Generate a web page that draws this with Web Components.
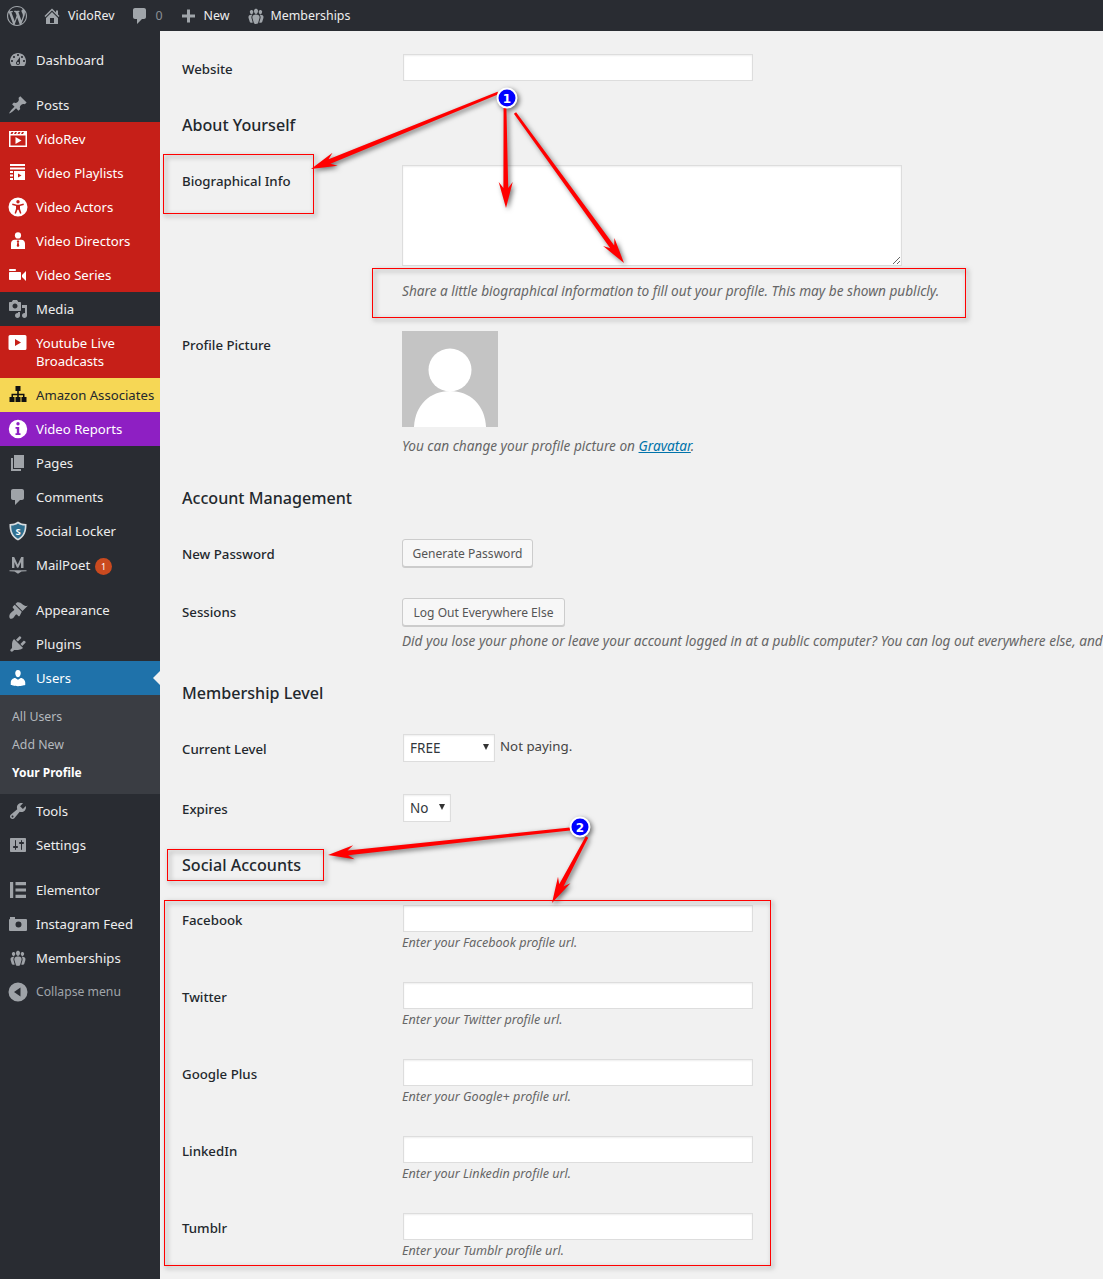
<!DOCTYPE html>
<html lang="en">
<head>
<meta charset="utf-8"/>
<title>Profile</title>
<style>
  html, body { margin: 0; padding: 0; overflow: hidden; }
  body { font-family: "Noto Sans", "Open Sans", sans-serif; }
  #page { position: relative; display: grid; grid-template-columns: 160px 1fr; grid-template-rows: 31px 1fr; width: 1103px; height: 1279px; overflow: hidden; background: #f1f1f1; }
  wp-adminbar { grid-column: 1 / 3; }
</style>
</head>
<body>
<div id="page">
  <wp-adminbar></wp-adminbar>
  <wp-sidebar>
    <wp-item icon="dashboard">Dashboard</wp-item>
    <wp-sep></wp-sep>
    <wp-item icon="pin">Posts</wp-item>
    <wp-item icon="film" tone="red">VidoRev</wp-item>
    <wp-item icon="playlist" tone="red">Video Playlists</wp-item>
    <wp-item icon="actor" tone="red">Video Actors</wp-item>
    <wp-item icon="director" tone="red">Video Directors</wp-item>
    <wp-item icon="series" tone="red">Video Series</wp-item>
    <wp-item icon="media">Media</wp-item>
    <wp-item icon="youtube" tone="red">Youtube Live Broadcasts</wp-item>
    <wp-item icon="sitemap" tone="yellow">Amazon Associates</wp-item>
    <wp-item icon="info" tone="purple">Video Reports</wp-item>
    <wp-item icon="pages">Pages</wp-item>
    <wp-item icon="comment">Comments</wp-item>
    <wp-item icon="shield">Social Locker</wp-item>
    <wp-item icon="mailpoet" badge="1">MailPoet</wp-item>
    <wp-sep></wp-sep>
    <wp-item icon="brush">Appearance</wp-item>
    <wp-item icon="plug">Plugins</wp-item>
    <wp-item icon="users" tone="blue">Users</wp-item>
    <wp-submenu>
      <a>All Users</a>
      <a>Add New</a>
      <a class="on">Your Profile</a>
    </wp-submenu>
    <wp-item icon="wrench">Tools</wp-item>
    <wp-item icon="sliders">Settings</wp-item>
    <wp-sep></wp-sep>
    <wp-item icon="elementor">Elementor</wp-item>
    <wp-item icon="camera">Instagram Feed</wp-item>
    <wp-item icon="groups">Memberships</wp-item>
    <wp-item icon="collapse" tone="muted">Collapse menu</wp-item>
  </wp-sidebar>
  <wp-profile></wp-profile>
  <wp-callouts></wp-callouts>
</div>

<script>
const ICONS = {
  wp: '<path d="M20 10c0-5.51-4.49-10-10-10C4.48 0 0 4.49 0 10c0 5.52 4.48 10 10 10 5.51 0 10-4.48 10-10zM7.78 15.37L4.37 6.22c.55-.02 1.17-.08 1.17-.08.5-.06.44-1.13-.06-1.11 0 0-1.45.11-2.37.11-.18 0-.37 0-.58-.01C4.12 2.69 6.87 1.11 10 1.11c2.33 0 4.45.87 6.05 2.34-.68-.11-1.65.39-1.65 1.58 0 .74.45 1.36.9 2.1.35.61.55 1.36.55 2.46 0 1.49-1.4 5-1.4 5l-3.03-8.37c.54-.02.82-.17.82-.17.5-.05.44-1.25-.06-1.22 0 0-1.44.12-2.38.12-.87 0-2.33-.12-2.33-.12-.5-.03-.56 1.2-.06 1.22l.92.08 1.26 3.41zM17.41 10c.24-.64.74-1.87.43-4.25.7 1.29 1.05 2.71 1.05 4.25 0 3.29-1.73 6.24-4.4 7.78.97-2.59 1.94-5.2 2.92-7.78zM6.1 18.09C3.12 16.65 1.11 13.53 1.11 10c0-1.3.23-2.48.72-3.59C3.25 10.3 4.67 14.2 6.1 18.09zm4.03-6.63l2.58 6.98c-.86.29-1.76.45-2.71.45-.79 0-1.57-.11-2.29-.33.81-2.38 1.62-4.74 2.42-7.1z"/>',
  home: '<path d="M16 8.5l1.53 1.53-1.06 1.06L10 4.62l-6.47 6.47-1.06-1.06L10 2.5l4 4v-2h2v4zm-6-2.46l6 5.99V18H4v-5.97zM12 17v-5H8v5h4z"/>',
  comment: '<path d="M5 2h9c1.1 0 2 .9 2 2v7c0 1.1-.9 2-2 2h-2l-5 5v-5H5c-1.1 0-2-.9-2-2V4c0-1.1.9-2 2-2z"/>',
  plus: '<path d="M17 7v3h-5v5H9v-5H4V7h5V2h3v5h5z" transform="translate(0 1.5)"/>',
  dashboard: '<path d="M3.76 16h12.48c1.1-1.37 1.76-3.11 1.76-5 0-4.42-3.58-8-8-8s-8 3.58-8 8c0 1.89.66 3.63 1.76 5zM10 4c.55 0 1 .45 1 1s-.45 1-1 1-1-.45-1-1 .45-1 1-1zM6 6c.55 0 1 .45 1 1s-.45 1-1 1-1-.45-1-1 .45-1 1-1zm8 0c.55 0 1 .45 1 1s-.45 1-1 1-1-.45-1-1 .45-1 1-1zm-5.37 5.55L12 7v6c0 1.1-.9 2-2 2s-2-.9-2-2c0-.57.24-1.08.63-1.45zM4 10c.55 0 1 .45 1 1s-.45 1-1 1-1-.45-1-1 .45-1 1-1zm12 0c.55 0 1 .45 1 1s-.45 1-1 1-1-.45-1-1 .45-1 1-1zm-5 3c0-.55-.45-1-1-1s-1 .45-1 1 .45 1 1 1 1-.45 1-1z"/>',
  pin: '<path d="M10.44 3.02l1.82-1.82 6.36 6.35-1.83 1.82c-1.05-.68-2.48-.57-3.41.36l-.75.75c-.92.93-1.04 2.35-.35 3.41l-1.83 1.82-2.41-2.41-2.8 2.79c-.42.42-3.38 2.71-3.8 2.29s1.86-3.39 2.28-3.81l2.79-2.79L4.1 9.36l1.83-1.82c1.05.69 2.48.57 3.4-.36l.75-.75c.93-.92 1.05-2.35.36-3.41z"/>',
  film: '<path fill-rule="evenodd" d="M1 2h18v16H1zM2.5 6.5v10h15v-10zM3.5 3l-1 2h2l1-2zM7 3l-1 2h2l1-2zM10.5 3l-1 2h2l1-2zM14 3l-1 2h2l1-2z"/><path d="M7.5 8l6 3.5-6 3.5z"/>',
  playlist: '<path fill-rule="evenodd" d="M2 1h15v2H2zM2 4.5h15v2H2zM2 8h3v2H2zM6 8h11v9H6zM2 11.5h3v2H2zM2 15h3v2H2zM10 10.5v4l3.5-2z"/>',
  actor: '<path fill-rule="evenodd" d="M10 .5a9.5 9.5 0 1 1 0 19 9.5 9.5 0 0 1 0-19zM10 3a1.7 1.7 0 1 0 0 3.4A1.7 1.7 0 0 0 10 3zM4.5 6.6l-.4 1.3 3.9 1.2v2.6L6.6 16.3l1.3.5 1.6-4h1l1.6 4 1.3-.5-1.4-4.6V9.1l3.9-1.2-.4-1.3-4.4 1.2H8.9z"/>',
  director: '<circle cx="10" cy="4.4" r="3.1"/><path fill-rule="evenodd" d="M6.6 8.8h6.8c2 0 3.6 1.6 3.6 3.6V18H3v-5.6c0-2 1.6-3.6 3.6-3.6zM9.2 9.6l-.5 1 .7.7-.7 3.8 1.3 1 1.3-1-.7-3.8.7-.7-.5-1z"/>',
  series: '<path d="M8 5c0-.55-.45-1-1-1H2c-.55 0-1 .45-1 1 0 .57.49 1 1 1h5c.55 0 1-.45 1-1zm6 5l4-4v10l-4-4v-2zm-1 4V8c0-.55-.45-1-1-1H2c-.55 0-1 .45-1 1v6c0 .55.45 1 1 1h10c.55 0 1-.45 1-1z"/>',
  media: '<path d="M13 11V4c0-.55-.45-1-1-1h-1.67L9 1H5L3.67 3H2c-.55 0-1 .45-1 1v7c0 .55.45 1 1 1h10c.55 0 1-.45 1-1zM7 4.5c1.38 0 2.5 1.12 2.5 2.5S8.38 9.5 7 9.5 4.5 8.38 4.5 7 5.62 4.5 7 4.5zM14 6h5v10.5c0 1.38-1.12 2.5-2.5 2.5S14 17.88 14 16.5s1.12-2.5 2.5-2.5c.17 0 .34.02.5.05V9h-3V6zm-4 8.05V13h2v3.5c0 1.38-1.12 2.5-2.5 2.5S7 17.88 7 16.5 8.12 14 9.5 14c.17 0 .34.02.5.05z"/>',
  youtube: '<path fill-rule="evenodd" d="M2 2h15a1.5 1.5 0 0 1 1.5 1.5v12A1.5 1.5 0 0 1 17 17H2a1.5 1.5 0 0 1-1.5-1.5v-12A1.5 1.5 0 0 1 2 2zM7 6v7l6-3.5z"/>',
  sitemap: '<path d="M7.5 1h5v5h-1.7v2.8h5.7V12h2v5h-5v-5h1.5v-1.7h-4.200V12h1.700v5h-5v-5h1.700v-1.700H5V12h1.500v5h-5v-5h2V8.800h5.700V6H7.500z"/>',
  info: '<path fill-rule="evenodd" d="M10 .8a9.2 9.2 0 1 1 0 18.4A9.2 9.2 0 0 1 10 .8zM8.3 4.8a1.7 1.7 0 1 0 3.4 0 1.7 1.7 0 0 0-3.4 0zM7.5 8v1.7h1.3v4.6H7.5V16h5v-1.7h-1.3V8z"/>',
  pages: '<path d="M6 15V2h10v13H6zm-1 1h8v2H3V5h2v11z"/>',
  shield: '<path d="M10 .5c2.5 1.8 5.3 2.6 8.5 2.5.3 7-1.800 13.200-8.500 16.500C3.300 16.200 1.200 10 1.500 3 4.700 3.100 7.500 2.300 10 .5z" fill="#d8dde0"/><path d="M10 2.500c2.100 1.400 4.300 2 6.800 2 .1 5.500-1.600 10.400-6.800 13.200C4.800 14.900 3.100 10 3.200 4.500c2.500 0 4.700-.6 6.800-2z" fill="#2f6f8f"/><text x="10" y="13.500" text-anchor="middle" font-size="9.500" font-weight="700" font-family="Noto Sans, sans-serif" fill="#fff">S</text>',
  mailpoet: '<path d="M4 2h2.200L9.700 9.500 13.200 2h2.300v11H13V7l-2.700 5.800H9L6.400 7v6H4z"/><path d="M1.500 15.200h17v1.100l-5 .3-3.500 2.200-3.500-2.200-5-.3z"/>',
  brush: '<path d="M14.480 11.060L7.410 3.990l1.500-1.500c.5-.56 2.300-.47 3.510.32 1.210.8 1.430 1.280 2.910 2.100 1.180.64 2.450 1.260 4.450.85zm-.71.71L6.700 4.700 4.930 6.470c-.39.39-.39 1.020 0 1.410l1.060 1.060c.39.39.39 1.030 0 1.420-.6.6-1.430 1.110-2.210 1.690-.35.26-.7.53-1.010.84-1.340 1.340-1.810 3.230-1.240 4.760.57 1.530 2.590 1.540 3.690.44.31-.31.58-.66.84-1.010.58-.78 1.090-1.610 1.690-2.210.39-.39 1.030-.39 1.420 0l1.060 1.060c.39.39 1.020.39 1.410 0z"/>',
  plug: '<path d="M13.110 4.360L9.870 7.600 8 5.730l3.240-3.240c.35-.34 1.050-.2 1.560.32.52.51.66 1.210.31 1.550zm-8 1.770l.91-1.120 9.010 9.010-1.190.84c-.71.71-2.630 1.160-3.820 1.160H6.140L4.900 17.260c-.59.59-1.540.59-2.120 0-.59-.58-.59-1.530 0-2.120l1.240-1.240v-3.880c0-1.130.4-3.190 1.090-3.890zm7.260 3.970l3.240-3.240c.34-.35 1.040-.21 1.550.31.52.51.66 1.210.31 1.550l-3.240 3.250z"/>',
  users: '<path d="M10 9.250c-2.270 0-2.730-3.440-2.730-3.440C7 4.020 7.820 2 9.970 2c2.160 0 2.980 2.020 2.710 3.810 0 0-.41 3.440-2.680 3.440zm0 2.570L12.720 10c2.390 0 4.520 2.330 4.520 4.530v2.490s-3.650 1.130-7.240 1.130c-3.650 0-7.240-1.130-7.240-1.130v-2.490c0-2.250 1.940-4.480 4.470-4.480z"/>',
  wrench: '<path d="M16.680 9.770c-1.340 1.340-3.300 1.670-4.950.99l-5.410 6.520c-.99.99-2.590.99-3.580 0s-.99-2.590 0-3.570l6.520-5.420c-.68-1.650-.35-3.610.99-4.950 1.280-1.280 3.120-1.620 4.720-1.060l-2.890 2.890 2.820 2.820 2.860-2.870c.53 1.580.18 3.390-1.080 4.650zM3.810 16.210c.4.39 1.040.39 1.430 0 .4-.4.4-1.040 0-1.430-.39-.4-1.030-.4-1.430 0-.39.39-.39 1.030 0 1.430z"/>',
  sliders: '<path d="M18 16V4c0-.55-.45-1-1-1H3c-.55 0-1 .45-1 1v12c0 .55.45 1 1 1h14c.55 0 1-.45 1-1zM8 11h1c.55 0 1 .45 1 1s-.45 1-1 1H8v1.500c0 .28-.22.5-.5.5s-.5-.22-.5-.5V13H6c-.55 0-1-.45-1-1s.45-1 1-1h1V5.500c0-.28.22-.5.5-.5s.5.22.5.5V11zm5-2h-1c-.55 0-1-.45-1-1s.45-1 1-1h1V5.500c0-.28.22-.5.5-.5s.5.22.5.5V7h1c.55 0 1 .45 1 1s-.45 1-1 1h-1v5.500c0 .28-.22.5-.5.5s-.5-.22-.5-.5V9z"/>',
  elementor: '<path d="M2 2h3.200v16H2zM7.500 2H18v3.200H7.500zM7.500 8.400H18v3.200H7.500zM7.500 14.800H18V18H7.500z"/>',
  camera: '<path fill-rule="evenodd" d="M2 3h5v2h11a1 1 0 0 1 1 1v10a1 1 0 0 1-1 1H2a1 1 0 0 1-1-1V6a1 1 0 0 1 1-1zM10.500 7.500a3 3 0 1 0 0 6 3 3 0 0 0 0-6z"/>',
  groups: '<path d="M8.030 4.460c-.29 1.280.55 3.460 1.970 3.460 1.410 0 2.250-2.180 1.960-3.460-.22-.98-1.080-1.630-1.960-1.630-.89 0-1.740.65-1.970 1.630zm-4.130.9c-.25 1.080.47 2.930 1.670 2.930s1.920-1.850 1.670-2.930c-.19-.83-.92-1.390-1.670-1.390s-1.480.56-1.670 1.390zm8.860 0c-.25 1.080.47 2.930 1.660 2.930 1.200 0 1.920-1.850 1.670-2.930-.19-.83-.92-1.390-1.670-1.390-.74 0-1.470.56-1.660 1.390zm-.59 11.430l1.250-4.300C14.200 10 12.710 8.470 10 8.470c-2.720 0-4.210 1.530-3.440 4.020l1.260 4.300C8.050 17.510 9 18 10 18c.98 0 1.940-.49 2.170-1.210zm-6.100-7.630c-.49.67-.96 1.830-.42 3.590l1.120 3.790c-.34.2-.77.31-1.200.31-.85 0-1.650-.41-1.850-1.030l-1.070-3.650c-.65-2.110.61-3.400 2.920-3.400.27 0 .54.02.79.06-.1.1-.2.22-.29.33zm8.350-.39c2.310 0 3.580 1.290 2.920 3.400l-1.070 3.650c-.2.620-1 1.030-1.850 1.030-.43 0-.86-.11-1.200-.31l1.110-3.770c.55-1.780.08-2.940-.42-3.610-.08-.11-.18-.23-.28-.33.25-.04.51-.06.79-.06z"/>',
  collapse: '<path fill-rule="evenodd" d="M10 .5a9.500 9.500 0 1 1 0 19 9.500 9.500 0 0 1 0-19zM12.500 5.500L6 10l6.500 4.500z"/>'
};

function icon(name, size) {
  return `<svg viewBox="0 0 20 20" width="${size}" height="${size}" fill="currentColor" aria-hidden="true">${ICONS[name]}</svg>`;
}

// top bar
class WpAdminbar extends HTMLElement {
  connectedCallback() {
    this.attachShadow({ mode: 'open' }).innerHTML = `
      <style>
        :host { display: flex; align-items: center; height: 31px; background: #292c32; color: #eee; font-size: 12.4px; }
        svg { color: #a0a5aa; flex: none; display: block; }
        span { white-space: nowrap; }
        .wp { margin-left: 7px; }
        .home { margin-left: 15px; }
        .site { margin-left: 6px; }
        .bubble { margin-left: 15px; }
        .zero { margin-left: 6px; color: #8a8f95; }
        .plus { margin-left: 15px; }
        .new { margin-left: 6px; }
        .group { margin-left: 16px; }
        .member { margin-left: 5px; }
      </style>
      <span class="wp">${icon('wp', 20)}</span>
      <span class="home">${icon('home', 20)}</span><span class="site">VidoRev</span>
      <span class="bubble">${icon('comment', 20)}</span><span class="zero">0</span>
      <span class="plus">${icon('plus', 20)}</span><span class="new">New</span>
      <span class="group">${icon('groups', 20)}</span><span class="member">Memberships</span>`;
  }
}

class WpSidebar extends HTMLElement {
  connectedCallback() {
    this.attachShadow({ mode: 'open' }).innerHTML = `
      <style>
        :host { display: block; background: #292c32; padding-top: 12px; }
      </style>
      <slot></slot>`;
  }
}

class WpSep extends HTMLElement {
  connectedCallback() {
    this.attachShadow({ mode: 'open' }).innerHTML = `<style>:host { display: block; height: 11px; }</style>`;
  }
}

class WpItem extends HTMLElement {
  connectedCallback() {
    const name = this.getAttribute('icon');
    const badge = this.getAttribute('badge');
    this.attachShadow({ mode: 'open' }).innerHTML = `
      <style>
        :host { display: flex; position: relative; min-height: 34px; box-sizing: border-box; background: #292c32; color: #eee; font-size: 13.15px; line-height: 18px; }
        :host([tone=red]) { background: #c61f18; color: #fff; }
        :host([tone=red]) .ico { color: #fff; }
        :host([tone=yellow]) { background: #f6d755; color: #23282d; }
        :host([tone=yellow]) .ico { color: #111; }
        :host([tone=purple]) { background: #8e1fc3; color: #fff; }
        :host([tone=purple]) .ico { color: #fff; }
        :host([tone=blue]) { background: #1f72aa; color: #fff; }
        :host([tone=blue]) .ico { color: #fff; }
        :host([tone=blue])::after { content: ""; position: absolute; right: 0; top: 10px; border: 7px solid transparent; border-left: 0; border-right-color: #f1f1f1; }
        :host([tone=muted]) { color: #a0a5aa; font-size: 12.2px; }
        .ico { flex: none; width: 36px; height: 34px; display: flex; align-items: center; justify-content: center; color: #9fa3a8; }
        .txt { padding: 8px 0; }
        .badge { display: inline-block; margin: -2px 0 -2px 5px; width: 17px; height: 17px; border-radius: 50%; background: #ca4a1f; color: #fff; font-size: 9px; line-height: 17px; text-align: center; vertical-align: middle; }
      </style>
      <span class="ico">${icon(name, 20)}</span>
      <span class="txt"><slot></slot>${badge ? `<span class="badge">${badge}</span>` : ''}</span>`;
  }
}

class WpSubmenu extends HTMLElement {
  connectedCallback() {
    this.attachShadow({ mode: 'open' }).innerHTML = `
      <style>
        :host { display: flex; flex-direction: column; height: 99px; box-sizing: border-box; padding-top: 8px; background: #3a3d43; font-size: 12.3px; }
        ::slotted(a) { display: block; height: 28px; line-height: 28px; padding-left: 12px; color: #b4b9be; }
        ::slotted(a.on) { color: #fff; font-weight: 700; font-size: 12px; }
      </style>
      <slot></slot>`;
  }
}

// label on the left, field on the right
class WpRow extends HTMLElement {
  connectedCallback() {
    this.attachShadow({ mode: 'open' }).innerHTML = `
      <style>
        :host { display: grid; grid-template-columns: 220px 1fr; padding: 15px 0; box-sizing: border-box; font-size: 13.25px; }
        .label { font-weight: 500; color: #23282d; line-height: 18px; padding-top: var(--label-top, 6px); }
      </style>
      <div class="label">${this.getAttribute('label')}</div>
      <div class="field"><slot></slot></div>`;
  }
}

class WpHeading extends HTMLElement {
  connectedCallback() {
    this.attachShadow({ mode: 'open' }).innerHTML = `
      <style>
        :host { display: flex; align-items: center; box-sizing: border-box; height: var(--h, 55px); padding: var(--pad, 0); font-size: 16.1px; font-weight: 500; color: #23282d; }
      </style>
      <slot></slot>`;
  }
}

class WpSelect extends HTMLElement {
  connectedCallback() {
    const w = this.getAttribute('width');
    const opt = this.getAttribute('value');
    this.attachShadow({ mode: 'open' }).innerHTML = `
      <style>
        :host { display: inline-block; position: relative; margin: -1px 0 0 1px; vertical-align: top; }
        select { appearance: none; display: block; width: ${w}px; height: 28px; box-sizing: border-box; background: #fff; border: 1px solid #ddd; border-radius: 0; padding: 0 0 0 6px; margin: 0; font: 13.5px "Noto Sans", sans-serif; color: #32373c; box-shadow: inset 0 1px 2px rgba(0,0,0,.07); outline: none; }
        i { position: absolute; right: 6px; top: 10px; border: 3.5px solid transparent; border-top: 6px solid #333; border-bottom: 0; }
      </style>
      <select><option>${opt}</option></select><i></i>`;
  }
}

class WpProfile extends HTMLElement {
  connectedCallback() {
    const social = [
      ['Facebook', 'Facebook'], ['Twitter', 'Twitter'], ['Google Plus', 'Google+'],
      ['LinkedIn', 'Linkedin'], ['Tumblr', 'Tumblr']
    ];
    this.attachShadow({ mode: 'open' }).innerHTML = `
      <style>
        :host { display: block; padding: 8px 0 0 22px; min-width: 0; overflow: hidden; color: #444; }
        input, textarea { display: block; box-sizing: border-box; margin: 0; background: #fff; border: 1px solid #ddd; box-shadow: inset 0 1px 2px rgba(0,0,0,.07); outline: none; border-radius: 0; }
        input { width: 350px; height: 27px; margin-left: 1px; }
        textarea { width: 500px; height: 101px; margin-top: -1px; resize: both; }
        p { margin: 0; font-size: 13.63px; font-style: italic; line-height: 20px; color: #666; white-space: nowrap; }
        .bio-note { margin-top: 15px; }
        a { color: #0073aa; text-decoration: underline; }
        button { display: block; height: 28px; margin-top: -1px; box-sizing: border-box; padding: 0; text-align: center; background: #f7f7f7; border: 1px solid #ccc; border-radius: 3px; box-shadow: 0 1px 0 #ccc; color: #555; font: 12.06px "Noto Sans", sans-serif; }
        .not { font-size: 13.3px; color: #444; margin-left: 5px; line-height: 22px; }
        .avatar { display: block; }
        .avatar + p { margin-top: 9px; }
        wp-row.tight { --label-top: 5px; }
        wp-row.sessions { --label-top: 4px; }
        wp-row.social { height: 77px; --label-top: 6px; }
        wp-row.social p { font-size: 12.6px; line-height: 21px; }
        .pw { height: 59px; }
        .level { height: 60px; --label-top: 5px; }
        .expires { height: 58px; --label-top: 5px; }
      </style>
      <wp-row label="Website" style="height:57px"><input type="text"></wp-row>
      <wp-heading style="--pad:2px 0 0">About Yourself</wp-heading>
      <wp-row label="Biographical Info" style="height:165px"><textarea></textarea>
        <p class="bio-note">Share a little biographical information to fill out your profile. This may be shown publicly.</p></wp-row>
      <wp-row label="Profile Picture" class="tight" style="height:155px">
        <svg class="avatar" width="96" height="96" viewBox="0 0 96 96"><rect width="96" height="96" fill="#c4c4c4"/><circle cx="48" cy="39" r="21.5" fill="#fff"/><path d="M12 96c1-22 16-36 36-36s35 14 36 36z" fill="#fff"/></svg>
        <p>You can change your profile picture on <a>Gravatar</a>.</p></wp-row>
      <wp-heading style="--h:54px">Account Management</wp-heading>
      <wp-row label="New Password" class="tight pw"><button style="width:131px">Generate Password</button></wp-row>
      <wp-row label="Sessions" class="sessions" style="height:82px"><button style="width:163px">Log Out Everywhere Else</button>
        <p style="margin-top:5px">Did you lose your phone or leave your account logged in at a public computer? You can log out everywhere else, and</p></wp-row>
      <wp-heading style="--h:54px">Membership Level</wp-heading>
      <wp-row label="Current Level" class="level"><wp-select width="92" value="FREE"></wp-select><span class="not">Not paying.</span></wp-row>
      <wp-row label="Expires" class="expires"><wp-select width="48" value="No"></wp-select></wp-row>
      <wp-heading style="--h:52px;--pad:2px 0 0">Social Accounts</wp-heading>
      ${social.map(([label, name]) => `
      <wp-row label="${label}" class="social"><input type="text"><p>Enter your ${name} profile url.</p></wp-row>`).join('')}`;
  }
}

// red boxes, arrows and numbered markers drawn over the page
class WpCallouts extends HTMLElement {
  arrow(x1, y1, x2, y2) {
    const len = Math.hypot(x2 - x1, y2 - y1);
    const ux = (x2 - x1) / len, uy = (y2 - y1) / len;
    const nx = -uy, ny = ux;
    const pt = (along, side) => `${(x1 + ux * along + nx * side).toFixed(1)},${(y1 + uy * along + ny * side).toFixed(1)}`;
    const head = 26;
    const pts = [pt(0, 1.4), pt(len - head + 6, 2.4), pt(len - head, 7), pt(len, 0), pt(len - head, -7), pt(len - head + 6, -2.4), pt(0, -1.4)];
    return `<polygon points="${pts.join(' ')}" fill="#f00"/>`;
  }
  connectedCallback() {
    const boxes = [[163.5, 154.5, 150, 59], [372.5, 268.5, 593, 49], [167.5, 849.5, 156, 31], [164.5, 900.5, 606, 365]];
    const marks = [[507, 98, '1'], [580, 827, '2']];
    this.attachShadow({ mode: 'open' }).innerHTML = `
      <style>
        :host { position: absolute; left: 0; top: 0; width: 1103px; height: 1279px; pointer-events: none; }
        svg { display: block; }
        .lay { filter: drop-shadow(2px 2px 2.5px rgba(0,0,0,.55)); }
        text { font: 700 12px "DejaVu Sans", sans-serif; fill: #fff; text-anchor: middle; }
      </style>
      <svg width="1103" height="1279">
        <g class="lay">
          ${boxes.map(b => `<rect x="${b[0]}" y="${b[1]}" width="${b[2]}" height="${b[3]}" fill="none" stroke="#f00"/>`).join('')}
          ${this.arrow(498, 93, 311, 169)}
          ${this.arrow(505, 106, 506, 208)}
          ${this.arrow(515, 113, 624, 263)}
          ${this.arrow(570, 829, 328, 855)}
          ${this.arrow(587, 837, 552, 903)}
          ${marks.map(m => `<circle cx="${m[0]}" cy="${m[1]}" r="9.5" fill="#00f" stroke="#fff" stroke-width="2"/>`).join('')}
        </g>
        ${marks.map(m => `<text x="${m[0]}" y="${m[1] + 4.5}">${m[2]}</text>`).join('')}
      </svg>`;
  }
}

customElements.define('wp-adminbar', WpAdminbar);
customElements.define('wp-sidebar', WpSidebar);
customElements.define('wp-sep', WpSep);
customElements.define('wp-item', WpItem);
customElements.define('wp-submenu', WpSubmenu);
customElements.define('wp-row', WpRow);
customElements.define('wp-heading', WpHeading);
customElements.define('wp-select', WpSelect);
customElements.define('wp-profile', WpProfile);
customElements.define('wp-callouts', WpCallouts);
</script>
</body>
</html>
